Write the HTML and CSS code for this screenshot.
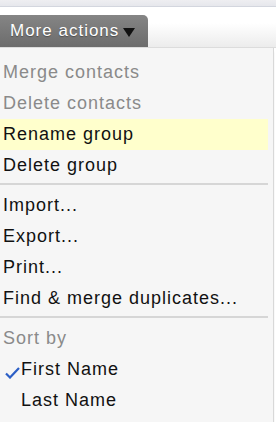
FILE: index.html
```html
<!doctype html>
<html lang="en">
<head>
  <meta charset="utf-8" />
  <meta name="viewport" content="width=device-width,initial-scale=1" />
  <title>More actions</title>
  <link rel="stylesheet" href="styles.css">
</head>
<body>
  <div class="topStrip"></div>

  <!-- toolbar with the menu button -->
  <div class="toolbar">
    <button class="moreBtn" type="button">More actions <span class="caret"></span></button>
  </div>

  <!-- dropdown -->
  <ul class="menu">
    <li class="item disabled">Merge contacts</li>
    <li class="item disabled">Delete contacts</li>
    <li class="item hover">Rename group</li>
    <li class="item">Delete group</li>
    <li class="sep"></li>
    <li class="item">Import...</li>
    <li class="item">Export...</li>
    <li class="item">Print...</li>
    <li class="item">Find &amp; merge duplicates...</li>
    <li class="sep"></li>
    <li class="item disabled">Sort by</li>
    <li class="item sortItem">
      <span class="check">
        <svg width="15" height="12" viewBox="0 0 15 12"><path d="M1 6.5 L5 10.5 L14 1" fill="none" stroke="#2c5fc6" stroke-width="2.2"/></svg>
      </span>First Name
    </li>
    <li class="item sortItem"><span class="check"></span>Last Name</li>
  </ul>
</body>
</html>
```

FILE: styles.css
```css
:root{
  --font: "Liberation Sans", Arial, sans-serif;
  --menuBg: #f6f6f6;
  --line: #d6d6d6;
  --hover: #ffffcc;
  --muted: #8a8a8a;
}

*{ box-sizing:border-box }
body{
  margin:0;
  background:#fff;
  font-family:var(--font);
}

.topStrip{
  height:7px;
  background: linear-gradient(#eeeef1, #e6e7ec);
  border-bottom:1px solid #d3d6de;
}

.toolbar{
  height:41px;
  padding-top:8px;
  background: linear-gradient(#fff 40%, #ececec);
  border-bottom:1px solid #dcdcdc;
}

.moreBtn{
  appearance:none;
  border:0;
  margin:0;
  height:32px;
  width:148px;
  padding:0 0 0 10px;
  border-radius:0 5px 0 0;
  background: linear-gradient(#858585, #6c6c6c);
  color:#fff;
  font: inherit;
  font-size:17px;
  letter-spacing:1px;
  text-align:left;
  text-shadow: 0 1px 1px rgba(0,0,0,.35);
  display:flex;
  align-items:center;
  gap:4px;
}
.caret{
  width:0; height:0;
  margin-top:3px;
  border-left:6px solid transparent;
  border-right:6px solid transparent;
  border-top:9px solid #111;
}

.menu{
  list-style:none;
  margin:0;
  width:274px;
  padding:9px 5px 6px 0;
  background: var(--menuBg);
  border-right:1px solid #d8d8d8;
  box-shadow: 0 3px 2px -1px rgba(0,0,0,.35);
}

.item{
  height:31px;
  line-height:31px;
  padding-left:3px;
  font-size:18px;
  letter-spacing:1px;
  color:#111;
  white-space:nowrap;
}
.item.disabled{ color: var(--muted); }
.item.hover{ background: var(--hover); }

.sep{
  height:2px;
  margin:2px 0 5px;
  background: var(--line);
}

.sortItem{
  display:flex;
  align-items:center;
}
.check{
  width:18px;
  height:31px;
  display:flex;
  align-items:center;
  padding:6px 0 0 2px;
}
```
